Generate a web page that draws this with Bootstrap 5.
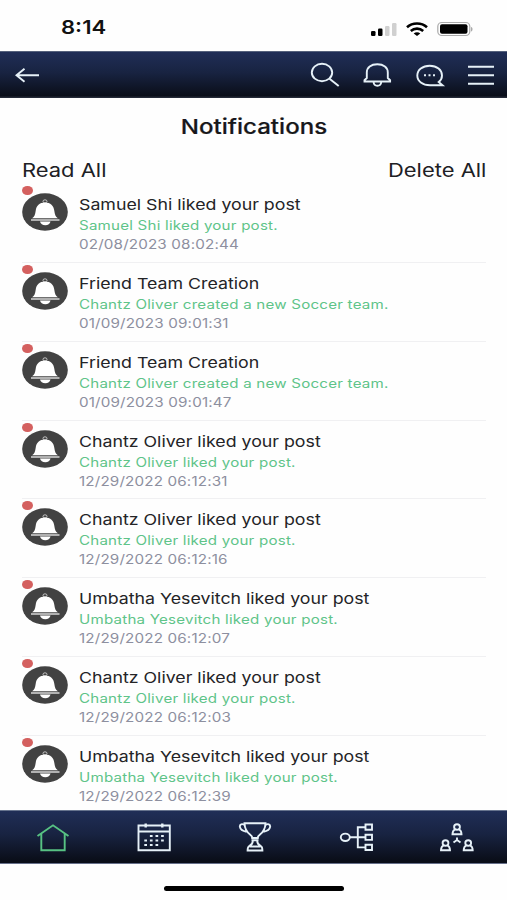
<!DOCTYPE html>
<html lang="en">
<head>
<meta charset="utf-8">
<meta name="viewport" content="width=device-width, initial-scale=1">
<title>Notifications</title>
<link rel="stylesheet" href="https://cdn.jsdelivr.net/npm/bootstrap@5.3.0/dist/css/bootstrap.min.css">
<style>
body{font-family:Inter,"Liberation Sans",sans-serif;color:#202024;background:#fefefe}
.screen{width:507px;height:900px}
svg{display:block;flex:none}
.statusbar{height:51px;padding:6px 34px 0 61px}
.clock{font-size:18.7px;font-weight:600;color:#111}
.wide{display:inline-block;transform:scaleX(1.18);transform-origin:0 50%;white-space:nowrap}
.wide-end{transform-origin:100% 50%}
.wide-mid{transform-origin:50% 50%}
.appbar{height:47px;padding:0 13px 0 15px;background:linear-gradient(#202e57,#182341 45%,#0a0e19 95%,#2c3240);border-top:1px solid #55617c}
.tabs{height:54px;padding-left:2px;background:linear-gradient(#202e57,#182341 45%,#0a0e19 95%);border-top:1px solid #67748e;border-bottom:1px solid #67708a}
.ln{fill:none;stroke:#e6f1f8;stroke-width:1.9}
.page-title{height:56px;line-height:57px;font-size:20.4px;font-weight:500;color:#17171a;-webkit-text-stroke:.2px #17171a}
.actions{height:30px;line-height:32px;font-size:18.6px;padding:0 21px 0 22px}
.feed{padding:0 21px 0 22px}
.note{height:78.85px;border-bottom:1px solid #f0f0f2;padding-top:10px}
.note-ico{width:46px;height:38px;margin-top:-1px;margin-right:11px}
.unread{width:10.500px;height:9px;border-radius:50%;background:#d4605f;left:0;top:-7px}
.t1{height:22px;line-height:22px;font-size:15.05px;color:#242427}
.t2{height:19px;line-height:19px;font-size:12.8px;letter-spacing:.19px;color:#5fc489}
.t3{height:19px;line-height:19px;font-size:12.9px;letter-spacing:.13px;color:#8d8f9f}
.homebar{width:180px;height:5px;border-radius:3px;background:#000;margin-top:22px}
</style>
</head>
<body>
<svg width="0" height="0" class="position-absolute"><defs><g id="bell">
<ellipse cx="23" cy="19" rx="22.8" ry="18.8" fill="#424242"/>
<ellipse cx="23" cy="8.400" rx="2" ry="1.600" fill="none" stroke="#ddd" stroke-width=".8"/>
<path fill="#fff" d="M23 9.500c5.500 0 8.700 3.300 9.300 8.200.5 4 1.300 5.800 3.600 7.600H10.100c2.300-1.800 3.100-3.600 3.600-7.600.6-4.900 3.800-8.200 9.300-8.200z"/>
<path d="M9 27h28.500" stroke="#eee" stroke-width="1.300"/><path d="M18 28.500h10.500c-.5 2.200-2.400 3.700-5.200 3.700s-4.800-1.500-5.300-3.700z" fill="#fff"/></g></defs></svg>
<div class="screen d-flex flex-column overflow-hidden">
<div class="statusbar d-flex justify-content-between align-items-center flex-shrink-0">
<span class="clock wide">8:14</span>
<svg width="104" height="18" viewBox="369 19 104 18"><rect x="371" y="30" width="4.500" height="5" rx="1.200"/><rect x="378" y="27.500" width="4.500" height="7.500" rx="1.200"/><rect x="385" y="25" width="4.500" height="10" rx="1.200" fill="#d0d0d0"/><rect x="392" y="22" width="4.500" height="13" rx="1.200" fill="#d0d0d0"/>
<path d="M407 26.300c5.500-5 14.500-5 20 0M410.800 29.900c3.500-3 8.900-3 12.400 0" fill="none" stroke="#000" stroke-width="2.600"/><path d="M417 35l-3.300-2.600c1.800-1.600 4.800-1.600 6.600 0z"/>
<rect x="437.800" y="21.500" width="32" height="13" rx="4" fill="none" stroke="#aaa" stroke-width="1.200"/><rect x="440" y="23.300" width="27.500" height="9.500" rx="2"/><path d="M471 26c2 .5 2 4 0 4.500z" fill="#aaa"/></svg>
</div>
<nav class="appbar d-flex justify-content-between align-items-center flex-shrink-0">
<svg width="25" height="30" viewBox="15 60 25 30"><path class="ln" d="M39 75.200H17M24.500 68.700l-8 6.500 8 6.500"/></svg>
<svg width="184" height="30" viewBox="310 60 184 30"><g class="ln"><ellipse cx="322" cy="72.500" rx="10.200" ry="8.700"/><path d="M329.500 78.800l9.200 7.200"/>
<path d="M364.500 81.500v-1.300l2.300-2.200v-5.500c0-5 4.200-8.200 10.500-8.200s10.500 3.200 10.500 8.200v5.500l2.300 2.200v1.300zM373.500 82c.3 2.500 1.800 3.800 3.900 3.800s3.600-1.300 3.900-3.800"/>
<path d="M442.500 85.200H430c-7.500 0-12.700-4.200-12.700-9.800s5.200-9.700 12.400-9.700 12.300 4.200 12.300 9.700c0 2.700-1.300 5-3.300 6.600z"/><path stroke-width="2" d="M424 75.300h2M428.500 75.300h2M433 75.300h2"/><path stroke-width="2" d="M468 66.700h26M468 75.200h26M468 83.700h26"/></g></svg>
</nav>
<main class="flex-fill overflow-hidden" style="min-height:0">
<h1 class="page-title text-center m-0"><span class="wide wide-mid">Notifications</span></h1>
<div class="actions d-flex justify-content-between"><span class="wide">Read All</span><span class="wide wide-end">Delete All</span></div>
<div class="feed" id="feed"></div>
</main>
<nav class="tabs row g-0 flex-shrink-0 align-items-center">
<div class="col d-flex justify-content-center"><svg width="34" height="32" viewBox="35 821 34 32"><path class="ln" style="stroke:#57c283" d="M36.500 836l15.500-10.700L67.500 836M40.300 834v16.200h23.400V834"/></svg></div>
<div class="col d-flex justify-content-center"><svg width="36" height="32" viewBox="135 821 36 32"><g class="ln"><path d="M137.500 825.500h31.300v24.700h-31.300zM137.500 831.500h31.300"/><path style="stroke-width:2.400" d="M144.700 823.500v4M161.300 823.500v4"/><path style="stroke-width:2.200" stroke-dasharray="2.700 2.900" d="M148.900 836h14M143.300 840.500h20M143.300 845h14"/></g></svg></div>
<div class="col d-flex justify-content-center"><svg width="36" height="32" viewBox="236 821 36 32"><g class="ln"><path d="M243.500 823.300h21c-.3 6-2.500 9-5.500 11.200-1.800 1.300-2.200 2.500-2.200 3.500h-5.600c0-1-.4-2.200-2.200-3.500-3-2.200-5.200-5.200-5.500-11.200zM243.800 825.200c-2.800-2-5.300-1-4.900 1.700.5 3 3 4.200 6.600 4.800M264.200 825.200c2.800-2 5.300-1 4.900 1.700-.5 3-3 4.200-6.600 4.800M250.500 840.300h7M251.800 841c0 3-1.500 4-3.600 5-1.200.6-1.600 2-1.600 4.500h14.800c0-2.500-.4-3.900-1.600-4.500-2.100-1-3.600-2-3.600-5M248.500 846.500h11"/></g></svg></div>
<div class="col d-flex justify-content-center"><svg width="36" height="32" viewBox="337 821 36 32"><g class="ln"><ellipse cx="344.300" cy="837.300" rx="4.500" ry="3.700"/><path d="M349 837.300h15.500M364.500 827.200h-7.700v20.200h7.700M364.500 824.500h6.500v5.200h-6.500zM364.500 834.700h6.500v5.200h-6.500zM364.500 844.800h6.500v5.200h-6.500z"/></g></svg></div>
<div class="col d-flex justify-content-center"><svg width="36" height="32" viewBox="439 821 36 32"><defs><g id="person"><ellipse cx="0" cy="-2.500" rx="2.900" ry="2.700"/><path d="M-2 0c-1.800.8-2.500 2-2.500 4.700h9C4.500 2 3.800.8 2 0"/></g></defs><g class="ln"><use href="#person" x="457" y="829.500"/><use href="#person" x="445.500" y="845.500"/><use href="#person" x="468.200" y="845.500"/><path d="M457 837.500v2.500l-3.500 2.500M457 840l3.500 2.500"/></g></svg></div>
</nav>
<div class="d-flex justify-content-center flex-shrink-0" style="height:36px"><div class="homebar"></div></div>
</div>
<script>
const notes=[
["Samuel Shi liked your post","Samuel Shi liked your post.","02/08/2023 08:02:44"],
["Friend Team Creation","Chantz Oliver created a new Soccer team.","01/09/2023 09:01:31"],
["Friend Team Creation","Chantz Oliver created a new Soccer team.","01/09/2023 09:01:47"],
["Chantz Oliver liked your post","Chantz Oliver liked your post.","12/29/2022 06:12:31"],
["Chantz Oliver liked your post","Chantz Oliver liked your post.","12/29/2022 06:12:16"],
["Umbatha Yesevitch liked your post","Umbatha Yesevitch liked your post.","12/29/2022 06:12:07"],
["Chantz Oliver liked your post","Chantz Oliver liked your post.","12/29/2022 06:12:03"],
["Umbatha Yesevitch liked your post","Umbatha Yesevitch liked your post.","12/29/2022 06:12:39"]];
document.getElementById("feed").innerHTML=notes.map(n=>`<article class="note d-flex"><div class="note-ico position-relative flex-shrink-0"><svg width="46" height="38"><use href="#bell"/></svg><span class="unread position-absolute"></span></div><div><div class="t1"><span class="wide">${n[0]}</span></div><div class="t2"><span class="wide">${n[1]}</span></div><div class="t3"><span class="wide">${n[2]}</span></div></div></article>`).join("");
</script>
<script src="https://cdn.jsdelivr.net/npm/bootstrap@5.3.0/dist/js/bootstrap.bundle.min.js"></script>
</body>
</html>
